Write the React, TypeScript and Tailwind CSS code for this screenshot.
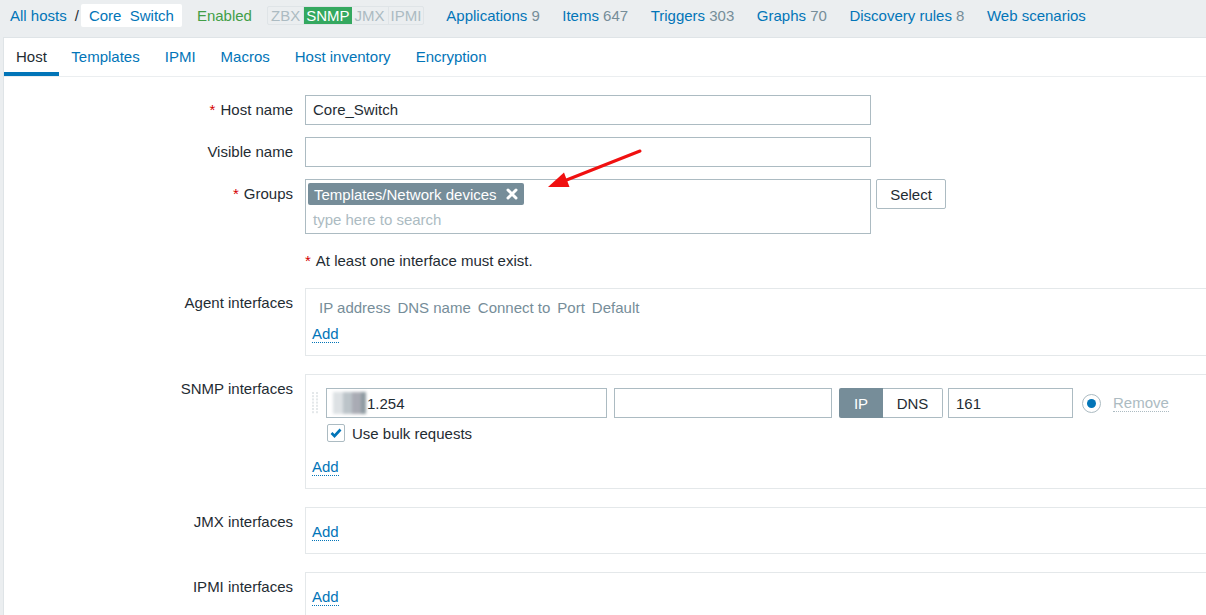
import React from "react";

const Req = () => <span className="text-[#d40000] mr-[5px]">*</span>;

function AddLink() {
  return (
    <div className="w-fit leading-[17px] text-[#0275b8] border-b border-dotted border-[#0275b8]">
      Add
    </div>
  );
}

function Label({ children, input }: { children: React.ReactNode; input?: boolean }) {
  return input ? (
    <div className="w-[289px] shrink-0 h-[30px] pb-[2px] flex items-center justify-end text-[#1f2c33]">{children}</div>
  ) : (
    <div className="w-[289px] shrink-0 pt-[6px] leading-[18px] text-right text-[#1f2c33]">{children}</div>
  );
}

function NavItem({ name, count }: { name: string; count?: string }) {
  return (
    <span className="whitespace-nowrap">
      <span className="text-[#0275b8]">{name}</span>
      {count && <span className="text-[#768d99]"> {count}</span>}
    </span>
  );
}

export default function App() {
  return (
    <div className="relative w-[1206px] h-[615px] overflow-hidden bg-[#ebeef0] font-['Liberation_Sans',Arial,sans-serif] text-[15px] leading-[17px] text-[#1f2c33]">
      {/* Header */}
      <div className="h-[37px] flex items-center pb-[6px] pl-[10px] whitespace-nowrap">
        <span className="text-[#0275b8]">All hosts</span>
        <span className="ml-[8px] text-[#1f2c33]">/</span>
        <span className="ml-[2px] h-[23px] px-[8px] flex items-center bg-white rounded-[2px] text-[#0275b8] whitespace-pre">
          Core  Switch
        </span>
        <span className="ml-[15px] text-[#429e47]">Enabled</span>
        <span className="ml-[15px] flex h-[19px] border border-[#dfe4e7] rounded-[2px] overflow-hidden leading-[17px]">
          <span className="px-[3px] text-[#acbbc2] border-r border-[#dfe4e7]">ZBX</span>
          <span className="px-[2px] bg-[#34a85f] text-white">SNMP</span>
          <span className="px-[3px] text-[#acbbc2] border-r border-[#dfe4e7]">JMX</span>
          <span className="px-[2px] text-[#acbbc2]">IPMI</span>
        </span>
        <div className="ml-[22px] flex gap-[22.5px]">
          <NavItem name="Applications" count="9" />
          <NavItem name="Items" count="647" />
          <NavItem name="Triggers" count="303" />
          <NavItem name="Graphs" count="70" />
          <NavItem name="Discovery rules" count="8" />
          <NavItem name="Web scenarios" />
        </div>
      </div>

      {/* Panel */}
      <div className="ml-[3px] h-[578px] bg-white border-t border-l border-[#dfe4e7]">
        {/* Tabs */}
        <div className="flex h-[39px] border-b border-[#ebeef0]">
          {["Host", "Templates", "IPMI", "Macros", "Host inventory", "Encryption"].map((t, i) => (
            <div
              key={t}
              className={
                i === 0
                  ? "px-[12px] h-[38px] flex items-center text-[#1f2c33] border-b-[4px] border-[#0275b8] pt-[2px]"
                  : "px-[12.5px] h-[38px] flex items-center text-[#0275b8] pb-[2px]"
              }
            >
              {t}
            </div>
          ))}
        </div>

        {/* Form */}
        <div className="pt-[18px] flex flex-col">
          {/* Host name */}
          <div className="flex gap-[12px]">
            <Label input>
              <Req />
              Host name
            </Label>
            <div className="w-[566px] shrink-0 h-[30px] border border-[#acbbc2] pl-[7px] pb-[1px] flex items-center">Core_Switch</div>
          </div>

          {/* Visible name */}
          <div className="flex gap-[12px] mt-[12px]">
            <Label input>Visible name</Label>
            <div className="w-[566px] shrink-0 h-[30px] border border-[#acbbc2]" />
          </div>

          {/* Groups */}
          <div className="flex gap-[12px] mt-[12px]">
            <Label input>
              <Req />
              Groups
            </Label>
            <div className="flex items-start">
              <div className="w-[566px] h-[55px] border border-[#acbbc2] pt-[3px] pl-[2px]">
                <span className="inline-flex items-center h-[22px] bg-[#768d99] text-white rounded-[2px] pl-[6px] pr-[6px]">
                  Templates/Network devices
                  <svg className="ml-[9px]" width="12" height="12" viewBox="0 0 12 12">
                    <path d="M2 2 L10 10 M10 2 L2 10" stroke="white" strokeWidth="3" strokeLinecap="round" />
                  </svg>
                </span>
                <div className="pl-[5px] mt-[6px] leading-[18px] text-[#acbbc2]">type here to search</div>
              </div>
              <div className="ml-[5px] w-[70px] h-[30px] border border-[#acbbc2] rounded-[2px] flex items-center justify-center bg-white">
                Select
              </div>
            </div>
          </div>

          {/* Error */}
          <div className="flex gap-[12px] mt-[12px]">
            <div className="w-[289px] shrink-0" />
            <div className="h-[30px] pb-[2px] flex items-center">
              <Req />
              At least one interface must exist.
            </div>
          </div>

          {/* Agent interfaces */}
          <div className="flex gap-[12px] mt-[12px]">
            <Label>Agent interfaces</Label>
            <div className="w-[940px] shrink-0 border border-[#e4e8ea] pt-[10px] pb-[12px] pl-[6px]">
              <div className="flex gap-[7px] pl-[7px] leading-[17px] text-[#768d99]">
                <span>IP address</span>
                <span>DNS name</span>
                <span>Connect to</span>
                <span>Port</span>
                <span>Default</span>
              </div>
              <div className="mt-[9px]">
                <AddLink />
              </div>
            </div>
          </div>

          {/* SNMP interfaces */}
          <div className="flex gap-[12px] mt-[18px]">
            <Label>SNMP interfaces</Label>
            <div className="w-[940px] shrink-0 border border-[#e4e8ea] pt-[13px] pb-[12px]">
              <div className="flex items-center h-[30px]">
                <svg className="ml-[5px] shrink-0" width="8" height="24" viewBox="0 0 8 24">
                  {[0, 1, 2, 3, 4, 5, 6].map((r) => (
                    <g key={r}>
                      <rect x="1" y={1 + r * 3.2} width="2" height="2" fill="#e4e8ea" />
                      <rect x="5" y={1 + r * 3.2} width="2" height="2" fill="#e4e8ea" />
                    </g>
                  ))}
                </svg>
                <div className="ml-[7px] w-[281px] shrink-0 h-[30px] border border-[#acbbc2] pl-[6px] flex items-center">
                  <div className="flex h-[22px] w-[33px] blur-[1.5px]">
                    <div className="w-[10px] h-full bg-[#dde1e4]" />
                    <div className="w-[9px] h-full bg-[#bcc4c9]" />
                    <div className="w-[9px] h-full bg-[#a9abb4]" />
                    <div className="w-[5px] h-full bg-[#8e9aa1]" />
                  </div>
                  <span className="ml-[1px]">1.254</span>
                </div>
                <div className="ml-[7px] w-[218px] shrink-0 h-[30px] border border-[#acbbc2]" />
                <div className="ml-[7px] flex h-[30px] w-[104px] shrink-0">
                  <div className="w-[44px] h-full bg-[#768d99] text-white flex items-center justify-center rounded-l-[2px]">
                    IP
                  </div>
                  <div className="w-[60px] h-full border border-l-0 border-[#acbbc2] flex items-center justify-center rounded-r-[2px]">
                    DNS
                  </div>
                </div>
                <div className="ml-[5px] w-[125px] shrink-0 h-[30px] border border-[#acbbc2] pl-[7px] flex items-center">161</div>
                <div className="ml-[9px] w-[19px] h-[19px] shrink-0 rounded-full border border-[#acbbc2] bg-white flex items-center justify-center">
                  <div className="w-[9px] h-[9px] rounded-full bg-[#0275b8]" />
                </div>
                <span className="ml-[12px] leading-[17px] text-[#acbbc2] border-b border-dotted border-[#acbbc2]">
                  Remove
                </span>
              </div>
              <div className="mt-[6px] ml-[21px] flex items-center h-[18px]">
                <div className="w-[18px] h-[18px] border border-[#acbbc2] rounded-[2px] flex items-center justify-center bg-white">
                  <svg width="12" height="10" viewBox="0 0 12 10">
                    <path d="M1.5 5 L4.5 8 L10.5 1.5" stroke="#0275b8" strokeWidth="2.6" fill="none" />
                  </svg>
                </div>
                <span className="ml-[7px]">Use bulk requests</span>
              </div>
              <div className="mt-[16px] ml-[6px]">
                <AddLink />
              </div>
            </div>
          </div>

          {/* JMX interfaces */}
          <div className="flex gap-[12px] mt-[18px]">
            <Label>JMX interfaces</Label>
            <div className="w-[940px] shrink-0 border border-[#e4e8ea] pt-[15px] pb-[12px] pl-[6px]">
              <AddLink />
            </div>
          </div>

          {/* IPMI interfaces */}
          <div className="flex gap-[12px] mt-[18px]">
            <Label>IPMI interfaces</Label>
            <div className="w-[940px] shrink-0 border border-[#e4e8ea] pt-[15px] pb-[12px] pl-[6px]">
              <AddLink />
            </div>
          </div>
        </div>
      </div>

      {/* Red annotation arrow */}
      <svg className="absolute left-0 top-0 pointer-events-none" width="1206" height="615" viewBox="0 0 1206 615">
        <line x1="640" y1="151" x2="564" y2="181" stroke="#f01010" strokeWidth="3" strokeLinecap="round" />
        <polygon points="548,187 564,172.5 569.5,187" fill="#f01010" />
      </svg>
    </div>
  );
}
